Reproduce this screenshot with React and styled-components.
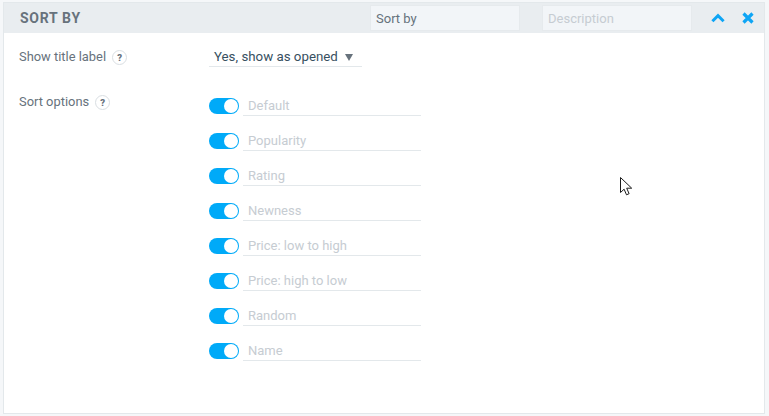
import styled, { createGlobalStyle } from "styled-components";

const GlobalStyle = createGlobalStyle`
	html, body {
		margin: 0;
		padding: 0;
		height: 100%;
		background: #f5f7f9;
		font-family: Roboto, "Liberation Sans", sans-serif;
	}
	* {
		box-sizing: border-box;
	}
`;

const Page = styled.div`
	width: 769px;
	height: 416px;
	padding: 2px 4px 2px 3px;
	position: relative;
	overflow: hidden;
`;

const Panel = styled.div`
	height: 412px;
	background: #fff;
	border: 1px solid #e3e8eb;
`;

const Header = styled.div`
	display: flex;
	align-items: center;
	height: 30px;
	padding: 0 9px 0 16px;
	background: #e9edf0;
`;

const Title = styled.div`
	flex: 1;
	font-size: 14px;
	font-weight: 700;
	letter-spacing: 0.7px;
	color: #67727c;
`;

const HeaderInput = styled.input`
	width: 150px;
	height: 26px;
	margin-left: ${(p) => p.$gap}px;
	padding: 0 5px;
	background: #f2f5f8;
	border: 1px solid #e6eaed;
	outline: none;
	font: 13px Roboto, sans-serif;
	color: #66727c;
	&::placeholder {
		color: #c6ccd2;
		opacity: 1;
	}
`;

const IconButton = styled.button`
	display: flex;
	align-items: center;
	justify-content: center;
	padding: 0;
	width: 14px;
	height: 14px;
	margin-left: ${(p) => p.$gap}px;
	background: none;
	border: 0;
	color: #0ea5f5;
`;

const Body = styled.div`
	padding: 14px 15px;
`;

const Field = styled.div`
	display: flex;
	margin-bottom: ${(p) => p.$gap || 0}px;
`;

const Label = styled.div`
	display: flex;
	align-items: center;
	gap: 6px;
	width: 190px;
	height: 18px;
	font-size: 12.9px;
	color: #67727c;
`;

const Help = styled.span`
	display: flex;
	align-items: center;
	justify-content: center;
	width: 15px;
	height: 15px;
	margin-top: 3px;
	border: 1px solid #d9dee2;
	border-radius: 50%;
	font-size: 9.5px;
	font-weight: 900;
	color: #67727c;
`;

const Select = styled.div`
	display: flex;
	align-items: center;
	width: 153px;
	height: 20px;
	padding-left: 5px;
	border-bottom: 1px solid #e3e8eb;
	font-size: 13.3px;
	color: #37505f;
`;

const Caret = styled.span`
	width: 0;
	height: 0;
	margin: 2px 0 0 7px;
	border-left: 4px solid transparent;
	border-right: 4px solid transparent;
	border-top: 7px solid #67727c;
`;

const Options = styled.div`
	display: flex;
	flex-direction: column;
	gap: 13px;
	margin-top: 2px;
`;

const OptionRow = styled.div`
	display: flex;
	align-items: flex-start;
	gap: 4px;
`;

const Toggle = styled.span`
	display: flex;
	justify-content: flex-end;
	width: 30px;
	height: 16px;
	margin-top: 4px;
	padding: 1px;
	flex: none;
	border-radius: 8px;
	background: #00aaf8;
`;

const Knob = styled.span`
	width: 14px;
	height: 14px;
	border-radius: 50%;
	background: #fff;
`;

const OptionInput = styled.input`
	width: 178px;
	height: 22px;
	padding: 2px 5px 0;
	border: 0;
	border-bottom: 1px solid #e3e8eb;
	outline: none;
	background: none;
	font: 13px Roboto, sans-serif;
	&::placeholder {
		color: #c6ccd2;
		opacity: 1;
	}
`;

const Cursor = styled.svg`
	position: absolute;
	left: 620px;
	top: 177px;
`;

const options = [
	"Default",
	"Popularity",
	"Rating",
	"Newness",
	"Price: low to high",
	"Price: high to low",
	"Random",
	"Name",
];

export default function App() {
	return (
		<Page>
			<GlobalStyle />
			<Panel>
				<Header>
					<Title>SORT BY</Title>
					<HeaderInput defaultValue="Sort by" />
					<HeaderInput $gap={22} placeholder="Description" />
					<IconButton $gap={19}>
						<svg width="15" height="10" viewBox="0 0 15 10">
							<path d="M1.5 8.5 7.5 2.5l6 6" fill="none" stroke="currentColor" strokeWidth="3.2" />
						</svg>
					</IconButton>
					<IconButton $gap={16}>
						<svg width="12" height="12" viewBox="0 0 12 12">
							<path d="M1.5 1.5l9 9M10.5 1.5l-9 9" fill="none" stroke="currentColor" strokeWidth="3.2" />
						</svg>
					</IconButton>
				</Header>
				<Body>
					<Field $gap={25}>
						<Label>
							Show title label
							<Help>?</Help>
						</Label>
						<Select>
							Yes, show as opened
							<Caret />
						</Select>
					</Field>
					<Field>
						<Label>
							Sort options
							<Help>?</Help>
						</Label>
						<Options>
							{options.map((option) => (
								<OptionRow key={option}>
									<Toggle>
										<Knob />
									</Toggle>
									<OptionInput placeholder={option} />
								</OptionRow>
							))}
						</Options>
					</Field>
				</Body>
			</Panel>
			<Cursor width="13" height="20" viewBox="0 0 13 20">
				<path
					d="M.5.5v15l3.6-3.3 2.4 5.6 2.6-1.1-2.4-5.5h5z"
					fill="#fff"
					stroke="#1c1c1c"
					strokeWidth="1"
				/>
			</Cursor>
		</Page>
	);
}
